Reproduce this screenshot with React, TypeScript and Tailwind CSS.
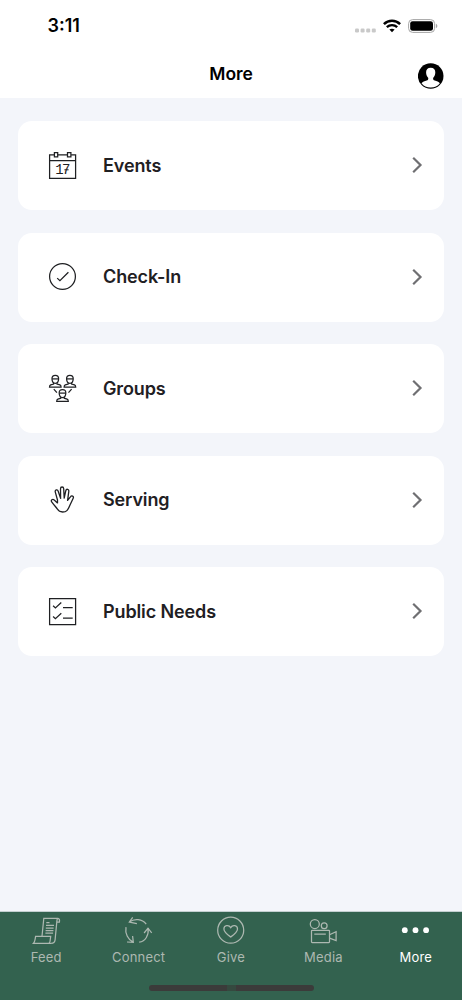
import React from 'react';

interface IconProps {
    className?: string;
}

interface MenuItem {
    label: string;
    icon: React.FC<IconProps>;
}

interface TabItem extends MenuItem {
    active?: boolean;
}

// Shared wrapper for the outline icons
const LineIcon: React.FC<IconProps & { children: React.ReactNode }> = ({ className = '', children }) => (
    <svg
        width="29"
        height="29"
        viewBox="0 0 29 29"
        fill="none"
        stroke="currentColor"
        strokeWidth="1.25"
        className={`block shrink-0 ${className}`}
    >
        {children}
    </svg>
);

const CalendarIcon: React.FC<IconProps> = (props) => (
    <LineIcon {...props}>
        <path d="M6.4 3.9H1.6v23.5h26V3.9h-4.5M9.8 3.9h9.6M1.6 9.7h26" />
        <path d="M6.4 1.6h3.3v4.2H6.4zM19.5 1.6h3.4v4.2h-3.4z" />
        <text
            x="7.3 14"
            y="23.4"
            stroke="none"
            fill="currentColor"
            fontSize="14"
            className="font-['Liberation_Mono',monospace]"
        >
            17
        </text>
        <path d="M16.4 18.8h4.2" strokeWidth="1" />
    </LineIcon>
);

const CheckIcon: React.FC<IconProps> = (props) => (
    <LineIcon {...props}>
        <circle cx="14.5" cy="14.5" r="12.9" />
        <path d="M9.2 16.1l2.7 2.5 8.5-8.4" />
    </LineIcon>
);

const Person: React.FC<{ x: number; y: number }> = ({ x, y }) => (
    <g transform={`translate(${x} ${y})`}>
        <path d="M-3.3 3.7C-3.5 1.3-2.2 0 0 0s3.5 1.3 3.3 3.7C3.2 6.3 1.8 8 0 8s-3.2-1.7-3.3-4.3z" />
        <path d="M-3.2 3.6H3.2" />
        <path d="M-1.7 7.5v1.2l-2.9.9c-.9.4-1.2 1-1.2 2.3H5.8c0-1.3-.3-1.9-1.2-2.3l-2.9-.9V7.5" />
    </g>
);

const GroupsIcon: React.FC<IconProps> = (props) => (
    <LineIcon {...props}>
        <Person x={7.3} y={1.3} />
        <Person x={21.9} y={1.3} />
        <Person x={14.5} y={15.5} />
        <path d="M5.8 15.2l3.1 3.5M23.6 15.2l-3.1 3.5" />
    </LineIcon>
);

const HandIcon: React.FC<IconProps> = (props) => (
    <LineIcon {...props}>
        <path
            d="M9.6 24.3C7.8 21.8 6.2 20.4 3.7 16.9c-1.2-1.8.9-3.4 2.5-2l3.3 3V15L7.3 7.1c-.6-2.3 2.2-3.1 2.9-.9l2.4 7.2L12.5 3.8c0-2.4 3.1-2.4 3.2 0l.5 9.4 1.6-7.5c.5-2.2 3.3-1.7 3 .6l-1.2 9.1 2.8-3.6c1.3-1.8 3.7-.5 2.8 1.4l-3.3 7c-.8 2-1.6 4-3 5.4-.9.9-2.3 1.4-4.3 1.4-2.3 0-4-.7-5-2.7z"
            strokeLinejoin="round"
            strokeWidth="1.3"
        />
    </LineIcon>
);

const ChecklistIcon: React.FC<IconProps> = (props) => (
    <LineIcon {...props}>
        <path d="M1.6 1.6h26v26h-26z" />
        <path d="M5.1 8.8l2.3 2.2 5.9-5.5M15 10.6h9.7M5.1 19.5l2.3 2.2 5.9-5.5M15 21h9.7" />
    </LineIcon>
);

const FeedIcon: React.FC<IconProps> = (props) => (
    <LineIcon {...props}>
        <path d="M10 20.3L11.8 2.3H26c1.3.1 1.8 1.8 1.4 3.7h-2.6M25.7 2.4c-.8.7-.8 2.1-.9 3.6l-1.7 17.8c-.3 2.2-1.7 3.5-3.9 3.5" />
        <path d="M3.6 20.3h15.1l-.7 5.2c-.2 1.2-.7 1.8-1.7 1.8H1.5c1.3-1.3 1.6-3.4 2.1-7zM16 27.3h3.4" />
        <path d="M14.3 6.7h3.2M14 9.3h8M13.8 12h7.8M13.6 14.6h7.8M13.4 17.2h7.7" />
    </LineIcon>
);

const ConnectIcon: React.FC<IconProps> = (props) => (
    <LineIcon {...props}>
        <path d="M22.2 8.1C18 2.8 10.6 2.2 5.3 6M8.7 1.3L5.3 6l7.6 1.6" />
        <path d="M2 11.2c-1.1 6 1.8 12.3 7.3 15.1M3 26l6.3.3L8.6 20" />
        <path d="M15.2 26.1c6.3-.6 9.9-7.1 8.8-13.9M20.1 17L24 12.2l3.7 4.6" />
    </LineIcon>
);

const GiveIcon: React.FC<IconProps> = (props) => (
    <LineIcon {...props}>
        <circle cx="14.7" cy="14.2" r="13" />
        <path d="M14.7 21c-3.5-2.6-6.8-5-6.8-8.1 0-3.7 4.9-4.5 6.8-1.3 1.9-3.2 6.8-2.4 6.8 1.3 0 3.1-3.3 5.5-6.8 8.1z" />
    </LineIcon>
);

const MediaIcon: React.FC<IconProps> = (props) => (
    <LineIcon {...props}>
        <circle cx="5.8" cy="8" r="4.5" />
        <circle cx="15.2" cy="9.7" r="2.9" />
        <rect x="2.5" y="14.4" width="18" height="12.1" rx=".7" />
        <path d="M5.3 18h11.5M20.5 18.7l6.6-3v9l-6.6-2.6" />
    </LineIcon>
);

const MoreIcon: React.FC<IconProps> = (props) => (
    <LineIcon {...props}>
        <g fill="currentColor" stroke="none">
            <circle cx="3.8" cy="14.2" r="2.9" />
            <circle cx="14.5" cy="14.2" r="2.9" />
            <circle cx="25.1" cy="14.2" r="2.9" />
        </g>
    </LineIcon>
);

const menuItems: MenuItem[] = [
    { label: 'Events', icon: CalendarIcon },
    { label: 'Check-In', icon: CheckIcon },
    { label: 'Groups', icon: GroupsIcon },
    { label: 'Serving', icon: HandIcon },
    { label: 'Public Needs', icon: ChecklistIcon },
];

const tabs: TabItem[] = [
    { label: 'Feed', icon: FeedIcon },
    { label: 'Connect', icon: ConnectIcon },
    { label: 'Give', icon: GiveIcon },
    { label: 'Media', icon: MediaIcon },
    { label: 'More', icon: MoreIcon, active: true },
];

const StatusBar = () => (
    <div className="flex h-[52px] items-center justify-between pl-[47.5px] pr-[24px]">
        <span className="text-[18px] font-semibold leading-none">3:11</span>
        <div className="flex items-center">
            <svg width="22" height="5" viewBox="0 0 22 5" className="mr-[6px] mt-[8px] fill-[#c9c9c9]">
                <rect x="0" y=".5" width="4" height="4" rx="1.2" />
                <rect x="5.6" y=".5" width="4" height="4" rx="1.2" />
                <rect x="11.2" y=".5" width="4" height="4" rx="1.2" />
                <rect x="16.8" y=".5" width="4" height="4" rx="1.2" />
            </svg>
            <svg width="18" height="14" viewBox="0 0 18 14" fill="none" stroke="#000" className="mr-[7px]">
                <path d="M.9 5.1c4.6-4.5 11.6-4.5 16.2 0" strokeWidth="2.5" />
                <path d="M3.8 8.2c3-2.9 7.4-2.9 10.4 0" strokeWidth="2.3" />
                <path d="M9 13.2L6.4 10.6c1.4-1.3 3.8-1.3 5.2 0z" fill="#000" stroke="none" />
            </svg>
            <svg width="30" height="14" viewBox="0 0 30 14" fill="none" className="-mt-[1px]">
                <rect x=".6" y=".6" width="26" height="12.8" rx="4" stroke="#a5a5a5" />
                <rect x="2.2" y="2.2" width="22.8" height="9.6" rx="2.4" fill="#000" />
                <path d="M27.9 4.8c1.9.7 1.9 3.7 0 4.4z" fill="#a5a5a5" />
            </svg>
        </div>
    </div>
);

const Avatar = () => (
    <svg width="26" height="26" viewBox="0 0 26 26" className="block">
        <circle cx="12.7" cy="13" r="12.8" fill="#000" />
        <path
            d="M12.7 4.7c-3 0-4.7 1.9-4.6 4.6 0 2.4.8 4.4 2.2 5.6 0 1.6-.3 2.2-1.6 2.7-2.1.8-4 1.3-5.2 2.6a11.6 11.6 0 0 0 9.2 4.3 11.6 11.6 0 0 0 9.2-4.3c-1.2-1.3-3.1-1.8-5.2-2.6-1.3-.5-1.6-1.1-1.6-2.7 1.4-1.2 2.2-3.2 2.2-5.6.1-2.7-1.6-4.6-4.6-4.6z"
            fill="#fff"
        />
    </svg>
);

const App: React.FC = () => {
    return (
        <div className="flex h-[1000px] w-[462px] flex-col overflow-hidden bg-[#f3f5fa] font-['Inter',sans-serif] text-black">
            <header className="h-[98px] shrink-0 bg-white">
                <StatusBar />
                <div className="grid h-[46px] grid-cols-[1fr_auto_1fr] items-center pr-[18px]">
                    <span />
                    <h1 className="pb-[2px] pl-[18px] text-[17.5px] font-semibold leading-none tracking-[-0.1px]">More</h1>
                    <div className="justify-self-end pt-[2px]">
                        <Avatar />
                    </div>
                </div>
            </header>

            <main className="flex flex-1 flex-col gap-[22.5px] px-[18px] pt-[23px]">
                {menuItems.map(({ label, icon: Icon }) => (
                    <button
                        key={label}
                        type="button"
                        className="flex h-[89px] shrink-0 items-center rounded-[14px] bg-white pb-[0.5px] pl-[30px] pr-[21px] text-[#1f2023]"
                    >
                        <Icon />
                        <span className="ml-[26px] pt-[1px] text-[18px] font-semibold leading-none tracking-[-0.12px]">{label}</span>
                        <svg
                            width="12"
                            height="18"
                            viewBox="0 0 12 18"
                            fill="none"
                            stroke="#6f6f72"
                            strokeWidth="2.2"
                            className="ml-auto"
                        >
                            <path d="M2.2 1.8L9.5 9l-7.3 7.2" />
                        </svg>
                    </button>
                ))}
            </main>

            <nav className="relative h-[89px] shrink-0 border-t border-[#c3cfd0] bg-[#33624f]">
                <div className="grid grid-cols-5 pt-[4px]">
                    {tabs.map(({ label, icon: Icon, active }) => (
                        <button
                            key={label}
                            type="button"
                            className={`flex flex-col items-center ${active ? 'text-white' : 'text-[#adb8b1]'}`}
                        >
                            <Icon />
                            <span className="mt-[5px] text-[13px] leading-[14px] tracking-[0.2px]">{label}</span>
                        </button>
                    ))}
                </div>
                {/* Home indicator */}
                <div className="absolute bottom-[9px] left-[149px] flex h-[6px] w-[165px] justify-center rounded-full bg-[#3b3b3a]">
                    <span className="h-full w-[9px] bg-[#35493f]" />
                </div>
            </nav>
        </div>
    );
};

export default App;
